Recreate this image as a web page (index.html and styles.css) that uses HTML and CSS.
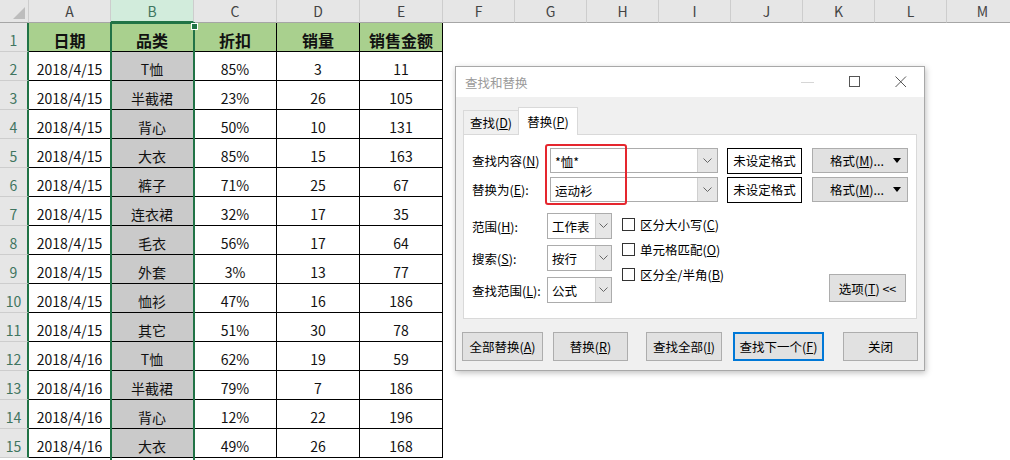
FILE: index.html
```html
<!DOCTYPE html>
<html lang="zh-CN">
<head>
<meta charset="utf-8">
<title>查找和替换</title>
<link rel="stylesheet" href="styles.css">
</head>
<body>
<div class="app">
  <div class="colhdr">
    <div class="ch corner"><svg width="12" height="12" viewBox="0 0 12 12"><polygon points="12,0 12,12 0,12" fill="#bdbdbd"/></svg></div>
    <div class="ch wa">A</div>
    <div class="ch wb colsel">B</div>
    <div class="ch wc">C</div>
    <div class="ch wc">D</div>
    <div class="ch wc">E</div>
    <div class="ch wf">F</div>
    <div class="ch wf">G</div>
    <div class="ch wf">H</div>
    <div class="ch wf">I</div>
    <div class="ch wf">J</div>
    <div class="ch wf">K</div>
    <div class="ch wf">L</div>
    <div class="ch wf">M</div>
  </div>
  <div class="sheet">
    <div class="rh">1</div><div class="c hd">日期</div><div class="c hd">品类</div><div class="c hd">折扣</div><div class="c hd">销量</div><div class="c hd">销售金额</div>
    <div class="rh">2</div><div class="c">2018/4/15</div><div class="c b">T恤</div><div class="c">85%</div><div class="c">3</div><div class="c">11</div>
    <div class="rh">3</div><div class="c">2018/4/15</div><div class="c b">半截裙</div><div class="c">23%</div><div class="c">26</div><div class="c">105</div>
    <div class="rh">4</div><div class="c">2018/4/15</div><div class="c b">背心</div><div class="c">50%</div><div class="c">10</div><div class="c">131</div>
    <div class="rh">5</div><div class="c">2018/4/15</div><div class="c b">大衣</div><div class="c">85%</div><div class="c">15</div><div class="c">163</div>
    <div class="rh">6</div><div class="c">2018/4/15</div><div class="c b">裤子</div><div class="c">71%</div><div class="c">25</div><div class="c">67</div>
    <div class="rh">7</div><div class="c">2018/4/15</div><div class="c b">连衣裙</div><div class="c">32%</div><div class="c">17</div><div class="c">35</div>
    <div class="rh">8</div><div class="c">2018/4/15</div><div class="c b">毛衣</div><div class="c">56%</div><div class="c">17</div><div class="c">64</div>
    <div class="rh">9</div><div class="c">2018/4/15</div><div class="c b">外套</div><div class="c">3%</div><div class="c">13</div><div class="c">77</div>
    <div class="rh">10</div><div class="c">2018/4/15</div><div class="c b">恤衫</div><div class="c">47%</div><div class="c">16</div><div class="c">186</div>
    <div class="rh">11</div><div class="c">2018/4/15</div><div class="c b">其它</div><div class="c">51%</div><div class="c">30</div><div class="c">78</div>
    <div class="rh">12</div><div class="c">2018/4/16</div><div class="c b">T恤</div><div class="c">62%</div><div class="c">19</div><div class="c">59</div>
    <div class="rh">13</div><div class="c">2018/4/16</div><div class="c b">半截裙</div><div class="c">79%</div><div class="c">7</div><div class="c">186</div>
    <div class="rh">14</div><div class="c">2018/4/16</div><div class="c b">背心</div><div class="c">12%</div><div class="c">22</div><div class="c">196</div>
    <div class="rh">15</div><div class="c">2018/4/16</div><div class="c b">大衣</div><div class="c">49%</div><div class="c">26</div><div class="c">168</div>
  </div>
  <div class="selbox"><span class="handle"></span></div>

  <div class="dialog">
    <div class="titlebar">
      <span class="title">查找和替换</span>
      <div class="winctl">
        <svg width="14" height="12" viewBox="0 0 14 12"><line x1="0" y1="6.5" x2="13" y2="6.5" stroke="#d6d6d6" stroke-width="1"/></svg>
        <svg width="12" height="12" viewBox="0 0 12 12"><rect x="0.5" y="0.5" width="10" height="10" fill="none" stroke="#555" stroke-width="1"/></svg>
        <svg width="12" height="12" viewBox="0 0 12 12"><path d="M0.5 0.5 L11 11 M11 0.5 L0.5 11" stroke="#555" stroke-width="1" fill="none"/></svg>
      </div>
    </div>
    <div class="dbody">
      <div class="tabs">
        <div class="tab">查找(<u>D</u>)</div>
        <div class="tab active">替换(<u>P</u>)</div>
      </div>
      <div class="panel">
        <div class="frow">
          <span class="flabel">查找内容(<u>N</u>)</span>
          <div class="combo"><span class="ctext">*恤*</span><span class="dd"><svg width="9" height="6" viewBox="0 0 9 6"><polyline points="0.5,0.5 4.5,4.5 8.5,0.5" fill="none" stroke="#666" stroke-width="1"/></svg></span></div>
          <div class="fmtbox">未设定格式</div>
          <div class="fmtbtn"><span>格式(<u>M</u>)...</span><svg width="8" height="5" viewBox="0 0 8 5"><polygon points="0,0 8,0 4,5" fill="#000"/></svg></div>
        </div>
        <div class="frow">
          <span class="flabel">替换为(<u>E</u>):</span>
          <div class="combo"><span class="ctext">运动衫</span><span class="dd"><svg width="9" height="6" viewBox="0 0 9 6"><polyline points="0.5,0.5 4.5,4.5 8.5,0.5" fill="none" stroke="#666" stroke-width="1"/></svg></span></div>
          <div class="fmtbox">未设定格式</div>
          <div class="fmtbtn"><span>格式(<u>M</u>)...</span><svg width="8" height="5" viewBox="0 0 8 5"><polygon points="0,0 8,0 4,5" fill="#000"/></svg></div>
        </div>
        <div class="opts">
          <div class="selcol">
            <div class="srow"><span class="slabel">范围(<u>H</u>):</span><div class="dropsel"><span class="stext">工作表</span><span class="sdd"><svg width="9" height="6" viewBox="0 0 9 6"><polyline points="0.5,0.5 4.5,4.5 8.5,0.5" fill="none" stroke="#666" stroke-width="1"/></svg></span></div></div>
            <div class="srow"><span class="slabel">搜索(<u>S</u>):</span><div class="dropsel"><span class="stext">按行</span><span class="sdd"><svg width="9" height="6" viewBox="0 0 9 6"><polyline points="0.5,0.5 4.5,4.5 8.5,0.5" fill="none" stroke="#666" stroke-width="1"/></svg></span></div></div>
            <div class="srow"><span class="slabel">查找范围(<u>L</u>):</span><div class="dropsel"><span class="stext">公式</span><span class="sdd"><svg width="9" height="6" viewBox="0 0 9 6"><polyline points="0.5,0.5 4.5,4.5 8.5,0.5" fill="none" stroke="#666" stroke-width="1"/></svg></span></div></div>
          </div>
          <div class="checks">
            <div class="chk"><span class="box"></span>区分大小写(<u>C</u>)</div>
            <div class="chk"><span class="box"></span>单元格匹配(<u>O</u>)</div>
            <div class="chk"><span class="box"></span>区分全/半角(<u>B</u>)</div>
          </div>
          <div class="optbtn">选项(<u>T</u>) &lt;&lt;</div>
        </div>
        <div class="redbox"></div>
      </div>
      <div class="btnrow">
        <div class="btn w1">全部替换(<u>A</u>)</div>
        <div class="btn w2">替换(<u>R</u>)</div>
        <div class="btn w3">查找全部(<u>I</u>)</div>
        <div class="btn w4 def">查找下一个(<u>F</u>)</div>
        <div class="btn w5">关闭</div>
      </div>
    </div>
  </div>
</div>
</body>
</html>
```
FILE: styles.css
```css
html, body {
  margin: 0;
  padding: 0;
  background: #fff;
  overflow: hidden;
}
.app {
  position: relative;
  width: 1010px;
  height: 460px;
  overflow: hidden;
  font-family: "Noto Sans CJK SC", "Noto Sans", sans-serif;
}
.colhdr {
  display: flex;
  height: 23px;
}
.ch {
  box-sizing: border-box;
  height: 23px;
  background: #e6e6e6;
  border-right: 1px solid #cdcdcd;
  border-bottom: 1px solid #a6a6a6;
  color: #444;
  font-size: 14px;
  line-height: 22px;
  text-align: center;
  flex: none;
}
.corner { width: 29px; display: flex; align-items: flex-end; justify-content: flex-end; padding: 0 3px 3px 0; }
.wa { width: 82px; }
.wb { width: 83px; }
.wc { width: 83px; }
.wf { width: 72px; }
.ch.colsel {
  background: #d2ecdc;
  color: #3f7560;
  border-bottom: 2px solid #217346;
}
.sheet {
  display: grid;
  grid-template-columns: 29px 82px 83px 83px 83px 83px;
  grid-auto-rows: 29px;
  width: 443px;
}
.rh {
  box-sizing: border-box;
  background: #e6e6e6;
  border-right: 2px solid #217346;
  border-bottom: 1px solid #cdcdcd;
  color: #3f7560;
  font-size: 14px;
  display: flex;
  align-items: center;
  justify-content: center;
  padding-top: 5px;
}
.c {
  box-sizing: border-box;
  border-right: 1px solid #000;
  border-bottom: 1px solid #000;
  font-size: 14px;
  color: #111;
  display: flex;
  align-items: center;
  justify-content: center;
  padding-top: 5px;
  white-space: nowrap;
}
.c.hd {
  background: #a9d08e;
  font-weight: 700;
  font-size: 16px;
}
.c.b { background: #cacaca; }
.selbox {
  position: absolute;
  left: 110px;
  top: 22px;
  width: 81px;
  height: 460px;
  border: 2px solid #217346;
}
.handle {
  position: absolute;
  right: -5px;
  top: -1px;
  width: 5px;
  height: 5px;
  background: #217346;
  border: 1px solid #fff;
}

/* dialog */
.dialog {
  position: absolute;
  left: 455px;
  top: 66px;
  width: 468px;
  height: 303px;
  border: 1px solid #a8a8a8;
  background: #f0f0f0;
  box-shadow: 1px 2px 6px rgba(0,0,0,0.25);
  font-size: 12px;
  color: #000;
}
.titlebar {
  height: 30px;
  background: #fff;
  display: flex;
  align-items: center;
  justify-content: space-between;
  padding: 0 17px 0 9px;
}
.title { color: #9a9a9a; font-size: 12.5px; }
.winctl { display: flex; align-items: center; gap: 34px; }
.winctl svg { display: block; }
.dbody { padding: 10px 0 0 7px; }
.tabs { display: flex; align-items: flex-end; height: 27px; position: relative; z-index: 1; }
.tab {
  box-sizing: border-box;
  height: 24px;
  width: 56px;
  border: 1px solid #d9d9d9;
  border-bottom: none;
  background: #f0f0f0;
  display: flex;
  align-items: center;
  justify-content: center;
  font-size: 12.5px;
}
.tab.active {
  height: 28px;
  width: 60px;
  background: #fff;
  margin-left: -1px;
  margin-bottom: -1px;
}
.panel {
  position: relative;
  box-sizing: border-box;
  width: 454px;
  height: 185px;
  border: 1px solid #d9d9d9;
  background: #fff;
  padding: 13px 0 0 8px;
}
.frow {
  display: flex;
  align-items: center;
  height: 25px;
  margin-bottom: 4px;
}
.flabel { width: 78px; font-size: 12.5px; }
.combo {
  box-sizing: border-box;
  width: 168px;
  height: 25px;
  border: 1px solid #acacac;
  display: flex;
  background: #fff;
}
.ctext { flex: 1; padding: 3px 0 0 4px; font-size: 12.5px; }
.dd {
  width: 19px;
  background: #e6e6e6;
  border-left: 1px solid #cfcfcf;
  display: flex;
  align-items: center;
  justify-content: center;
}
.fmtbox {
  box-sizing: border-box;
  width: 75px;
  height: 26px;
  margin-left: 9px;
  border: 1px solid #000;
  display: flex;
  align-items: center;
  justify-content: center;
  font-size: 12.5px;
  background: #fff;
}
.fmtbtn {
  box-sizing: border-box;
  width: 96px;
  height: 25px;
  margin-left: 10px;
  border: 1px solid #adadad;
  background: #e1e1e1;
  display: flex;
  align-items: center;
  justify-content: flex-end;
  gap: 9px;
  padding-right: 6px;
  font-size: 12.5px;
}
.opts {
  display: flex;
  margin-top: 11px;
}
.selcol { width: 150px; display: flex; flex-direction: column; gap: 6px; }
.srow { display: flex; align-items: center; height: 26px; }
.slabel { width: 75px; font-size: 12.5px; }
.dropsel {
  box-sizing: border-box;
  width: 65px;
  height: 26px;
  border: 1px solid #acacac;
  display: flex;
  background: #fff;
}
.stext { flex: 1; padding: 3px 0 0 4px; font-size: 12.5px; }
.sdd {
  width: 15px;
  background: #e6e6e6;
  border-left: 1px solid #cfcfcf;
  display: flex;
  align-items: center;
  justify-content: center;
}
.checks {
  width: 207px;
  display: flex;
  flex-direction: column;
  gap: 7px;
  padding-top: 2px;
}
.chk { display: flex; align-items: center; height: 18px; font-size: 12.5px; }
.box {
  box-sizing: border-box;
  width: 13px;
  height: 13px;
  border: 1px solid #333;
  background: #fff;
  margin-right: 5px;
}
.optbtn {
  box-sizing: border-box;
  align-self: flex-end;
  width: 77px;
  height: 28px;
  margin-bottom: 1px;
  border: 1px solid #adadad;
  background: #e1e1e1;
  display: flex;
  align-items: center;
  justify-content: center;
  font-size: 12.5px;
}
.redbox {
  position: absolute;
  left: 81px;
  top: 9px;
  width: 78px;
  height: 57px;
  border: 2px solid #e5262e;
  border-radius: 3px;
}
.btnrow {
  display: flex;
  margin-top: 13px;
  margin-left: -1px;
}
.btn {
  box-sizing: border-box;
  height: 29px;
  border: 1px solid #adadad;
  background: #e1e1e1;
  display: flex;
  align-items: center;
  justify-content: center;
  font-size: 12.5px;
}
.btn.def { border: 2px solid #0078d7; }
.w1 { width: 81px; }
.w2 { width: 75px; margin-left: 10px; }
.w3 { width: 76px; margin-left: 18px; }
.w4 { width: 91px; margin-left: 11px; }
.w5 { width: 75px; margin-left: 19px; }
```
